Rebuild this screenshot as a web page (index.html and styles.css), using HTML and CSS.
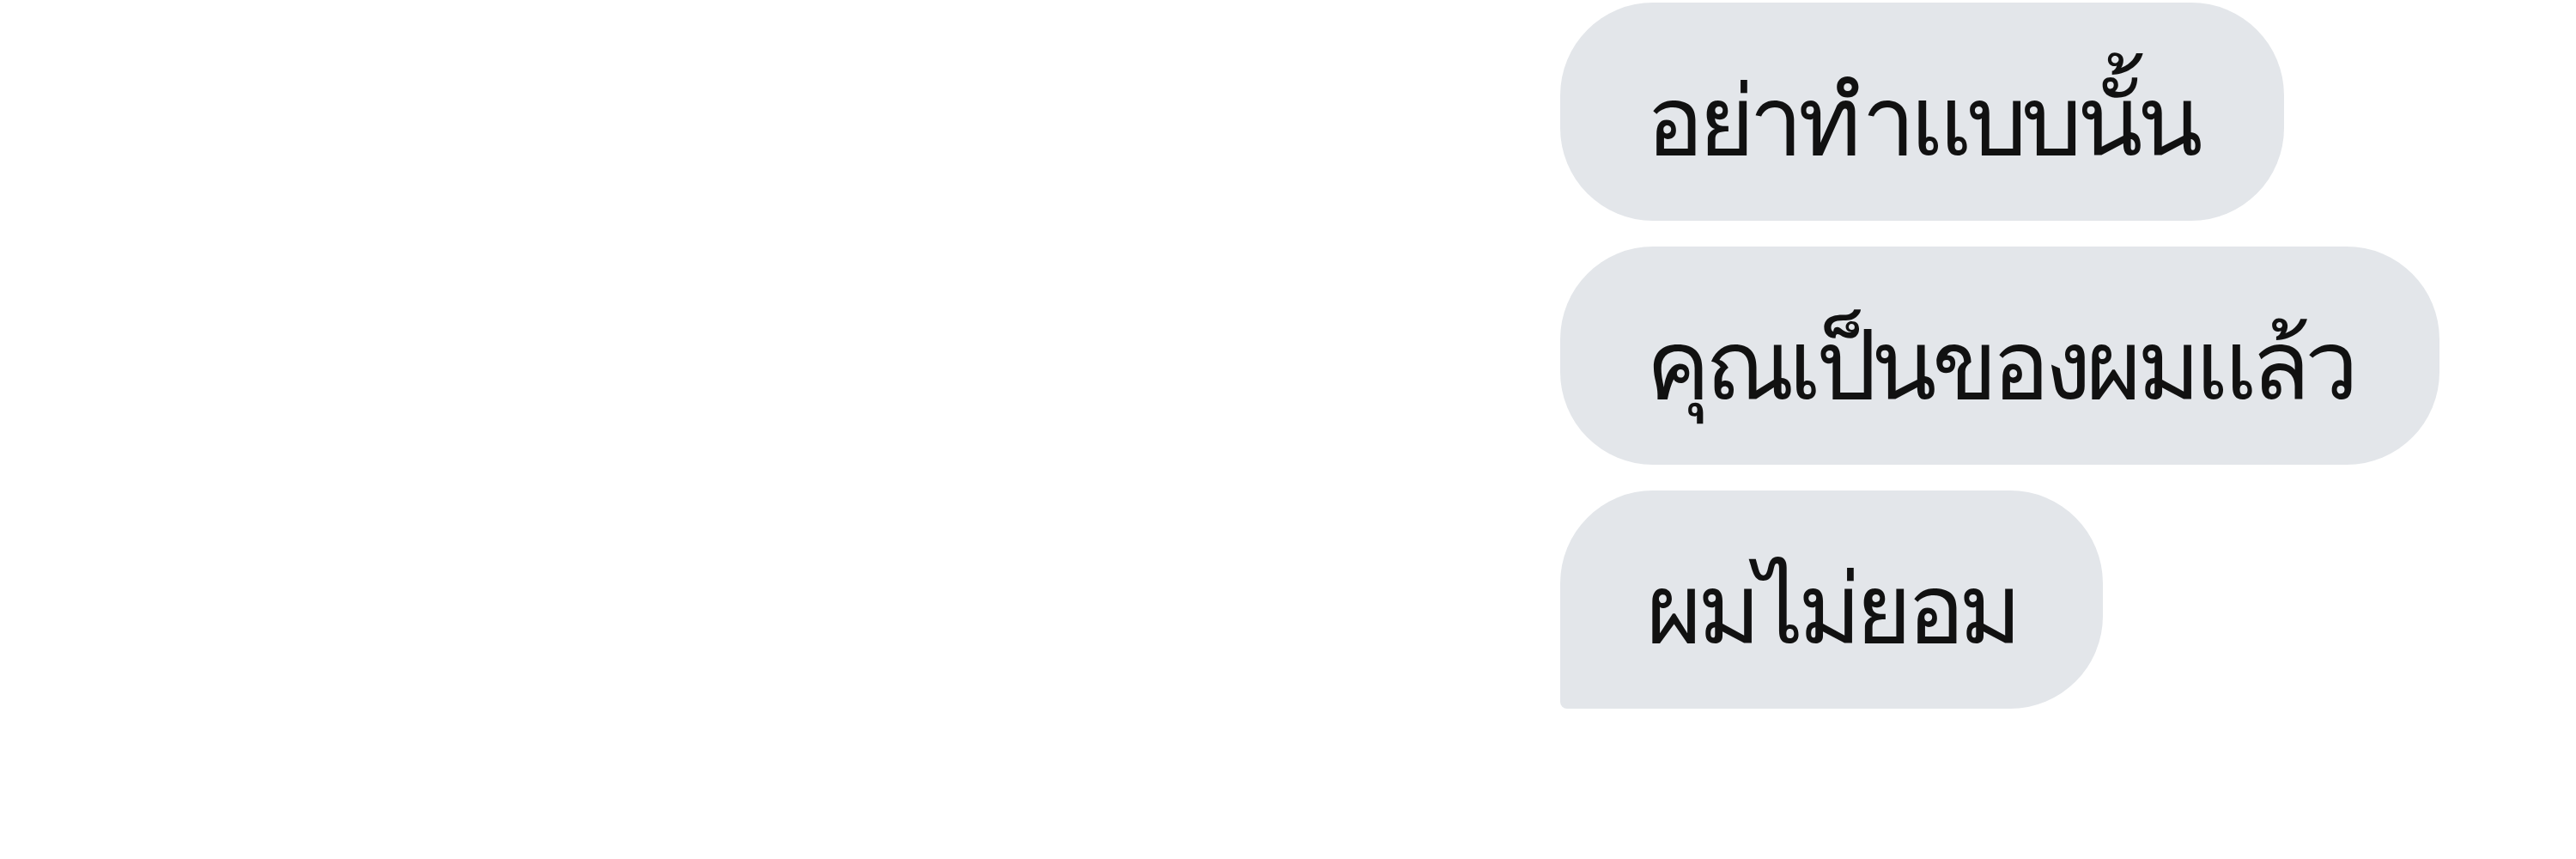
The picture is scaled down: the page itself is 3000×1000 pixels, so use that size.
FILE: index.html
```html
<!DOCTYPE html>
<html lang="th">
<head>
    <meta charset="UTF-8">
    <title>Chat</title>
    <link rel="stylesheet" href="styles.css">
</head>
<body>
    <div class="thread">
        <div class="bubble">อย่าทำแบบนั้น</div>
        <div class="bubble">คุณเป็นของผมแล้ว</div>
        <div class="bubble last">ผมไม่ยอม</div>
    </div>
</body>
</html>
```

FILE: styles.css
```css
* {
    box-sizing: border-box;
    margin: 0;
    padding: 0;
}

body {
    background: #fff;
    font-family: "Noto Sans", sans-serif;
    color: #111;
}

.thread {
    display: flex;
    flex-direction: column;
    align-items: flex-start;
    gap: 30px;
    padding: 3px 0 0 1817px;
}

.bubble {
    display: flex;
    align-items: center;
    height: 254px;
    padding: 20px 100px 0;
    background: #e3e6ea;
    border-radius: 108px;
    font-size: 112px;
    font-weight: 500;
    letter-spacing: -6.5px;
    white-space: nowrap;
}

.bubble.last {
    border-bottom-left-radius: 8px;
}
```
